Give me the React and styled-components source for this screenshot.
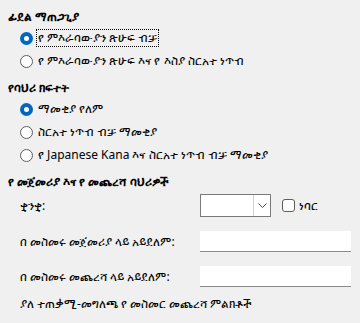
import React from 'react';
import styled, { createGlobalStyle } from 'styled-components';

const Global = createGlobalStyle`
  html, body {
    margin: 0;
    padding: 0;
    background: #f0f0f0;
  }
  body {
    font-family: "Noto Sans", "DejaVu Sans", sans-serif;
    font-size: 12px;
    color: #000;
  }
`;

const Page = styled.div`
  width: 360px;
  height: 323px;
  padding: 8px 9px 0 8px;
  box-sizing: border-box;
  display: flex;
  flex-direction: column;
`;

const Section = styled.div`
  display: flex;
  flex-direction: column;
  margin-bottom: ${p => p.gap || 0}px;
`;

const Heading = styled.div`
  font-weight: bold;
  height: 18px;
  line-height: 18px;
  margin-bottom: 3px;
`;

const OptionList = styled.div`
  display: flex;
  flex-direction: column;
  gap: 5px;
  padding-left: 12px;
`;

const Option = styled.div`
  display: flex;
  align-items: center;
  gap: 4px;
  height: 18px;
`;

const RadioDot = styled.span`
  width: 13px;
  height: 13px;
  border-radius: 50%;
  box-sizing: border-box;
  flex-shrink: 0;
  background: #fff;
  border: ${p => (p.checked ? '4px solid #0067c0' : '1px solid #5d5d5d')};
`;

const OptionText = styled.span`
  line-height: 16px;
  padding: 0 1px;
  outline: ${p => (p.focused ? '1px dotted #000' : 'none')};
`;

const FormRow = styled.div`
  display: flex;
  align-items: center;
  padding-left: 12px;
  height: 23px;
  margin-bottom: ${p => p.gap || 0}px;
`;

const Label = styled.span`
  width: 180px;
  flex-shrink: 0;
`;

const Combo = styled.div`
  width: 71px;
  height: 23px;
  box-sizing: border-box;
  border: 1px solid #7a7a7a;
  background: #fff;
  display: flex;
  justify-content: flex-end;
`;

const ComboButton = styled.div`
  width: 17px;
  height: 21px;
  box-sizing: border-box;
  border-left: 1px solid #d0d0d0;
  display: flex;
  align-items: center;
  justify-content: center;
`;

const Check = styled.label`
  display: flex;
  align-items: center;
  gap: 4px;
  margin-left: 11px;
`;

const CheckBox = styled.span`
  width: 13px;
  height: 13px;
  box-sizing: border-box;
  border: 1px solid #5d5d5d;
  border-radius: 3px;
  background: #fff;
`;

const TextBox = styled.div`
  width: 151px;
  height: 21px;
  box-sizing: border-box;
  background: #fff;
  border-bottom: 1px solid #8a8a8a;
`;

const Note = styled.div`
  padding-left: 12px;
  height: 18px;
  line-height: 18px;
`;

const Radio = ({ checked, focused, children }) => (
  <Option>
    <RadioDot checked={checked} />
    <OptionText focused={focused}>{children}</OptionText>
  </Option>
);

export default function App() {
  return (
    <>
      <Global />
      <Page>
        <Section gap={9}>
          <Heading>ፊደል ማጠጋጊያ</Heading>
          <OptionList>
            <Radio checked focused>የ ምእራባውያን ጽሁፍ ብቻ</Radio>
            <Radio>የ ምእራባውያን ጽሁፍ እና የ እስያ ስርአተ ነጥብ</Radio>
          </OptionList>
        </Section>

        <Section gap={9}>
          <Heading>የባህሪ ክፍተት</Heading>
          <OptionList>
            <Radio checked>ማመቂያ የለም</Radio>
            <Radio>ስርአተ ነጥብ ብቻ ማመቂያ</Radio>
            <Radio>የ Japanese Kana እና ስርአተ ነጥብ ብቻ ማመቂያ</Radio>
          </OptionList>
        </Section>

        <Section>
          <Heading>የ መጀመሪያ እና የ መጨረሻ ባህሪዎች</Heading>
          <FormRow gap={13}>
            <Label>ቋንቋ:</Label>
            <Combo>
              <ComboButton>
                <svg width="9" height="5" viewBox="0 0 9 5">
                  <path d="M0.5 0.5 L4.5 4.5 L8.5 0.5" fill="none" stroke="#444" strokeWidth="1" />
                </svg>
              </ComboButton>
            </Combo>
            <Check>
              <CheckBox />
              <span>ነባር</span>
            </Check>
          </FormRow>
          <FormRow gap={12}>
            <Label>በ መስመሩ መጀመሪያ ላይ አይደለም:</Label>
            <TextBox />
          </FormRow>
          <FormRow gap={7}>
            <Label>በ መስመሩ መጨረሻ ላይ አይደለም:</Label>
            <TextBox />
          </FormRow>
          <Note>ያለ ተጠቃሚ-መግለጫ የ መስመር መጨረሻ ምልክቶች</Note>
        </Section>
      </Page>
    </>
  );
}
